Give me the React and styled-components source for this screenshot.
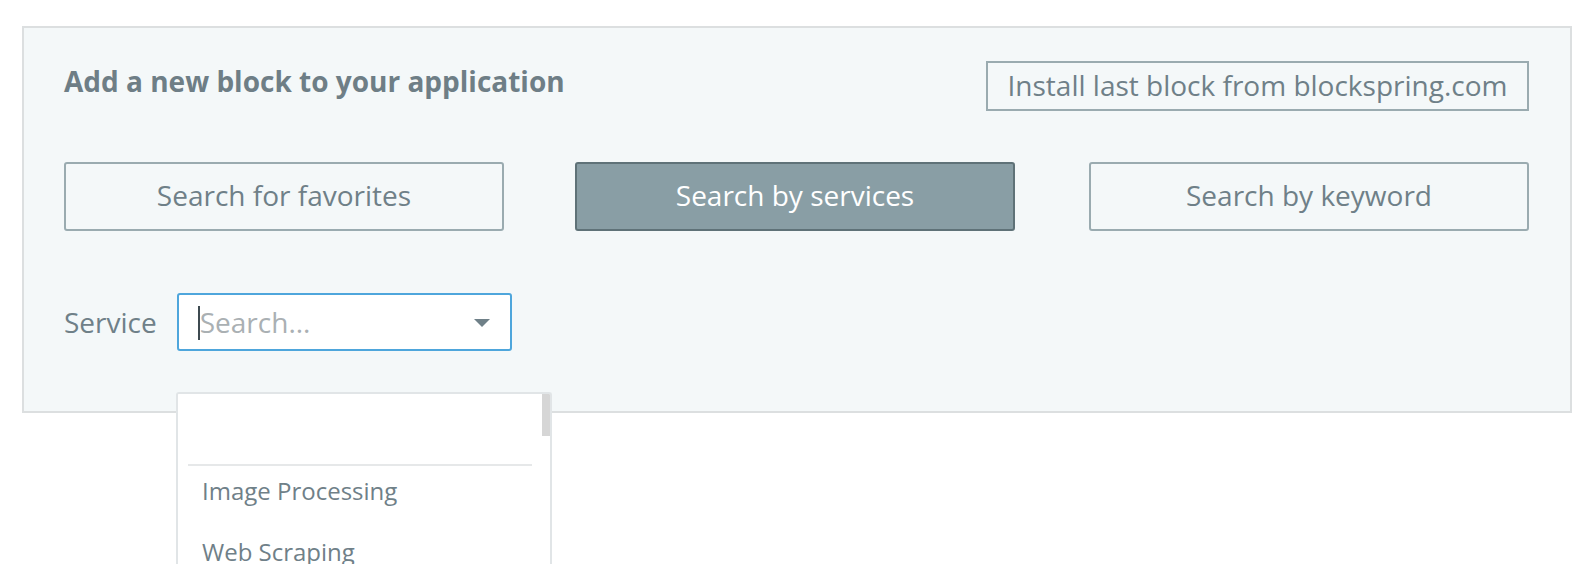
import React, { useState } from "react";
import styled, { createGlobalStyle } from "styled-components";

const GlobalStyle = createGlobalStyle`
  html {
    overflow: hidden;
  }
  body {
    margin: 0;
    padding: 0;
    background: #fff;
    font-family: "Open Sans", "Noto Sans", sans-serif;
    color: #6f8088;
  }
`;

const App = () => {
  const [mode, setMode] = useState("services");

  const tabs = [
    { id: "favorites", label: "Search for favorites" },
    { id: "services", label: "Search by services" },
    { id: "keyword", label: "Search by keyword" },
  ];

  const services = ["Image Processing", "Web Scraping"];

  return (
    <Page>
      <GlobalStyle />
      <Panel>
        <Header>
          <Title>Add a new block to your application</Title>
          <InstallButton>Install last block from blockspring.com</InstallButton>
        </Header>

        <Tabs>
          {tabs.map((tab) => (
            <Tab
              key={tab.id}
              active={tab.id === mode ? 1 : 0}
              onClick={() => setMode(tab.id)}
            >
              {tab.label}
            </Tab>
          ))}
        </Tabs>

        <ServiceRow>
          <Label>Service</Label>
          <Select>
            <Caret />
            <Placeholder>Search...</Placeholder>
            <Arrow />
          </Select>
        </ServiceRow>

        <Dropdown>
          <Thumb />
          <EmptyOption />
          <Divider />
          {services.map((name) => (
            <Option key={name}>{name}</Option>
          ))}
        </Dropdown>
      </Panel>
    </Page>
  );
};

const Page = styled.div`
  box-sizing: border-box;
  height: 100vh;
  padding: 26px 16px 0 22px;
`;

const Panel = styled.div`
  position: relative;
  background: #f4f8f9;
  border: 2px solid #dcdfe0;
  padding: 33px 41px 60px 40px;
`;

const Header = styled.div`
  display: flex;
  justify-content: space-between;
  align-items: flex-start;
`;

const Title = styled.h2`
  margin: 0;
  padding-top: 1px;
  font-size: 28px;
  font-weight: 700;
  line-height: 38px;
  color: #6e7e86;
`;

const InstallButton = styled.button`
  height: 50px;
  width: 543px;
  background: transparent;
  border: 2px solid #9aabb0;
  border-radius: 0;
  font-family: inherit;
  font-size: 28px;
  color: #6f8088;
  cursor: pointer;
  padding: 0 0 2px;
`;

const Tabs = styled.div`
  display: flex;
  gap: 71px;
  margin-top: 51px;

  & > :last-child {
    margin-left: auto;
  }
`;

const Tab = styled.button`
  width: 440px;
  height: 69px;
  border-radius: 3px;
  border: 2px solid ${(props) => (props.active ? "#5f7278" : "#9aabb0")};
  background: ${(props) => (props.active ? "#899ea5" : "transparent")};
  color: ${(props) => (props.active ? "#fff" : "#6f8088")};
  font-family: inherit;
  font-size: 28px;
  cursor: pointer;
  padding: 0 0 4px;
`;

const ServiceRow = styled.div`
  display: flex;
  align-items: center;
  gap: 20px;
  margin-top: 62px;
`;

const Label = styled.span`
  font-size: 28px;
  line-height: 58px;
`;

const Select = styled.div`
  position: relative;
  display: flex;
  align-items: center;
  box-sizing: border-box;
  width: 335px;
  height: 58px;
  background: #fff;
  border: 2px solid #4ea6dc;
  border-radius: 3px;
  padding-left: 19px;
`;

const Caret = styled.span`
  width: 2px;
  height: 34px;
  background: #3d4a50;
  margin-top: 2px;
`;

const Placeholder = styled.span`
  font-size: 28px;
  color: #aab0b3;
`;

const Arrow = styled.span`
  position: absolute;
  right: 20px;
  top: 24px;
  width: 0;
  height: 0;
  border-left: 8px solid transparent;
  border-right: 8px solid transparent;
  border-top: 8px solid #6f8088;
`;

const Dropdown = styled.div`
  position: absolute;
  left: 152px;
  top: 364px;
  width: 376px;
  height: 172px;
  box-sizing: border-box;
  background: #fff;
  border: 2px solid #e1e5e7;
  border-bottom: none;
  border-radius: 3px 3px 0 0;
  overflow: hidden;
`;

const Thumb = styled.div`
  position: absolute;
  top: 0;
  right: 0;
  width: 8px;
  height: 42px;
  background: #d6d6d6;
`;

const EmptyOption = styled.div`
  height: 70px;
`;

const Divider = styled.div`
  height: 2px;
  background: #e6e8e9;
  margin: 0 18px 0 10px;
`;

const Option = styled.div`
  padding-left: 24px;
  font-size: 24px;
  line-height: 49px;
  height: 61px;
  color: #6f8088;
`;

export default App;
